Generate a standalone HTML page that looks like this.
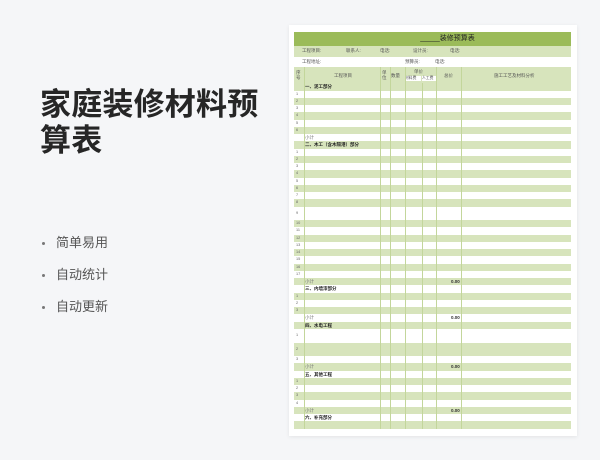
<!DOCTYPE html>
<html><head><meta charset="utf-8"><style>
*{margin:0;padding:0;box-sizing:border-box}
body{width:600px;height:460px;background:#f5f6f8;position:relative;overflow:hidden;font-family:"Liberation Sans","Noto Sans CJK SC",sans-serif}
.t{position:absolute;left:40px;top:87px;font-size:31px;line-height:36px;font-weight:bold;color:#262626;letter-spacing:0.2px;width:230px}
.b{position:absolute;left:56px;font-size:13px;color:#555;line-height:16px}
.b:before{content:"";position:absolute;left:-14px;top:7px;width:3px;height:3px;border-radius:50%;background:#777}
.paper{position:absolute;left:289px;top:25px;width:288px;height:411px;background:#fff;box-shadow:0 1px 4px rgba(0,0,0,.08)}
.tb{position:absolute;left:294px;top:31.5px;width:277px}
.r{position:relative;height:7.25px;font-size:4.5px;line-height:7.25px;color:#444}
.g{background:#d7e4bc}.w{background:#fff}
.r.tall{height:13.6px;line-height:13.6px}
.c{position:absolute;top:0;bottom:0;border-left:0.6px solid #c3d69b}
.n{position:absolute;left:2px;font-size:3.8px;color:#666}
.x{position:absolute;left:11px;font-weight:bold;color:#222}
.s{position:absolute;left:11px;color:#777}
.v{position:absolute;left:157px;font-weight:bold;color:#333}
</style></head><body>
<div class="t">家庭装修材料预算表</div>
<div class="b" style="top:235px">简单易用</div>
<div class="b" style="top:267px">自动统计</div>
<div class="b" style="top:299px">自动更新</div>
<div class="paper"></div>
<div class="tb">
<div style="height:14.5px;background:#9bbb59;color:#222;font-size:7px;line-height:14.5px;text-align:center;padding-left:30px">_____装修预算表</div>
<div style="height:10.7px;background:#d7e4bc;font-size:4.5px;line-height:10.7px;color:#555;position:relative"><span style="position:absolute;left:8px">工程项目:</span><span style="position:absolute;left:52px">联系人:</span><span style="position:absolute;left:86px">电话:</span><span style="position:absolute;left:119px">设计员:</span><span style="position:absolute;left:156px">电话:</span></div>
<div style="height:10.7px;background:#fff;font-size:4.5px;line-height:10.7px;color:#555;position:relative"><span style="position:absolute;left:8px">工程地址:</span><span style="position:absolute;left:111px">预算员:</span><span style="position:absolute;left:141px">电话:</span></div>
<div style="height:16px;background:#d7e4bc;position:relative;font-size:4.5px;color:#555">
<span style="position:absolute;left:2px;top:3px;line-height:5px">序<br>号</span>
<span style="position:absolute;left:40px;top:6px">工程项目</span>
<span style="position:absolute;left:88px;top:3px;line-height:5px">单<br>位</span>
<span style="position:absolute;left:97px;top:6px">数量</span>
<span style="position:absolute;left:120px;top:2px">单价</span>
<span style="position:absolute;left:111px;top:9px;background:#fff;width:16px;height:5px;line-height:5px;font-size:3.8px">材料费</span>
<span style="position:absolute;left:128px;top:9px;background:#fff;width:14px;height:5px;line-height:5px;font-size:3.8px">人工费</span>
<span style="position:absolute;left:150px;top:6px">总价</span>
<span style="position:absolute;left:200px;top:6px">施工工艺及材料分析</span>
<div class="c" style="left:9.7px"></div><div class="c" style="left:86px"></div><div class="c" style="left:95.5px"></div><div class="c" style="left:110.7px"></div><div class="c" style="left:142.3px"></div><div class="c" style="left:166.7px"></div>
</div>
<div id="rows"></div>
</div>
<script>
var rows=[["x","一、泥工部分"]];
for(var i=1;i<=6;i++)rows.push(["n",i]);
rows.push(["s","小计"],["x","二、木工（含木隔港）部分"]);
for(i=1;i<=17;i++)rows.push(["n",i,i==9]);
rows.push(["s","小计",0,1],["x","三、内墙漆部分"]);
for(i=1;i<=3;i++)rows.push(["n",i]);
rows.push(["s","小计",0,1],["x","四、水电工程"],["n",1,1],["n",2,1],["n",3],["s","小计",0,1],["x","五、其他工程"]);
for(i=1;i<=4;i++)rows.push(["n",i]);
rows.push(["s","小计",0,1],["x","六、补充部分"],["e",""]);
var h="";
var cols='<div class="c" style="left:9.7px"></div><div class="c" style="left:86px"></div><div class="c" style="left:95.5px"></div><div class="c" style="left:110.7px"></div><div class="c" style="left:127.7px"></div><div class="c" style="left:142.3px"></div><div class="c" style="left:166.7px"></div>';
rows.forEach(function(r,k){
h+='<div class="r '+(k%2?'w':'g')+(r[2]?' tall':'')+'">'+cols+(r[0]!="e"?'<span class="'+r[0]+'">'+r[1]+'</span>':'')+(r[3]?'<span class="v">0.00</span>':'')+'</div>';
});
document.getElementById("rows").innerHTML=h;
</script>
</body></html>
